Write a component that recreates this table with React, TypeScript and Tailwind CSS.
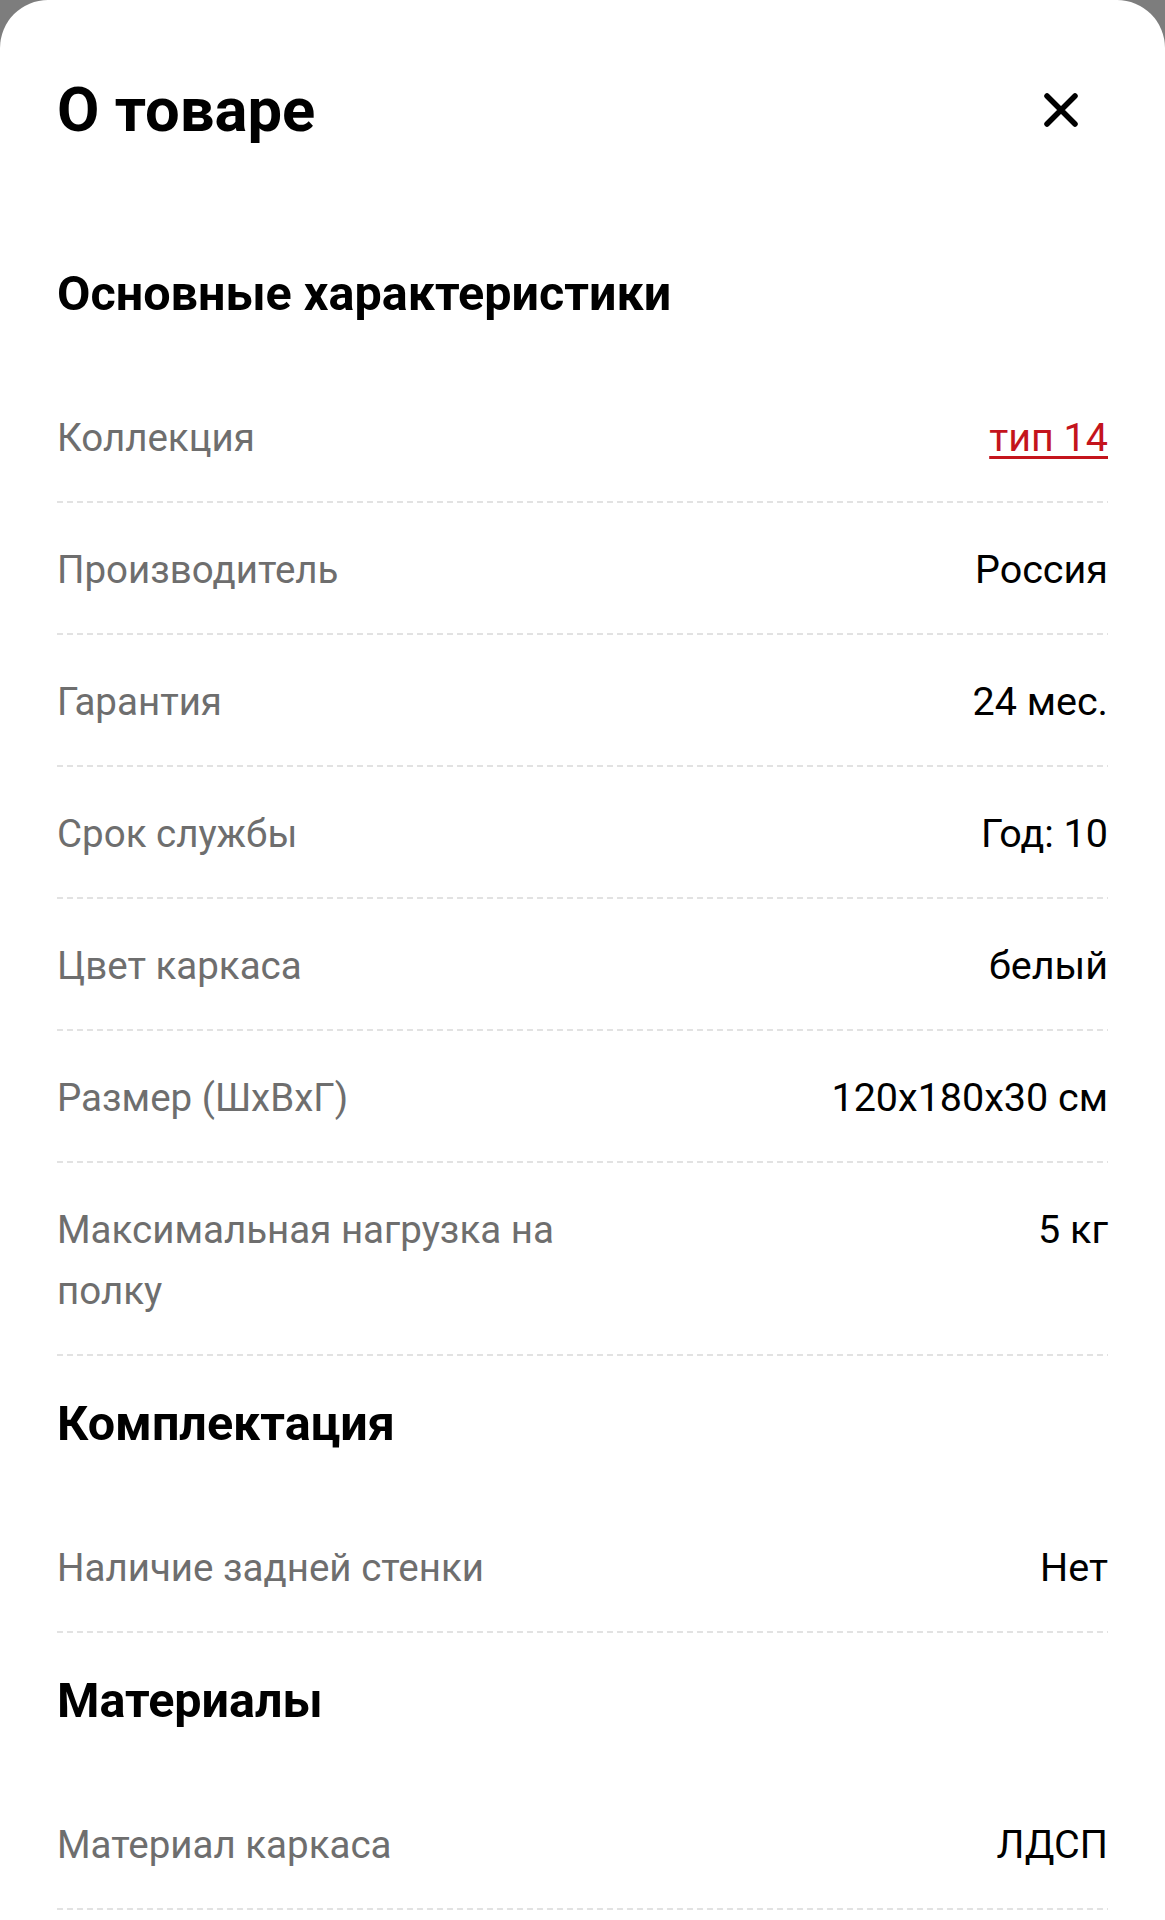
import React from "react";

type Row = { label: string; value: string; link?: boolean };

const sections: { title: string; rows: Row[] }[] = [
  {
    title: "Основные характеристики",
    rows: [
      { label: "Коллекция", value: "тип 14", link: true },
      { label: "Производитель", value: "Россия" },
      { label: "Гарантия", value: "24 мес." },
      { label: "Срок службы", value: "Год: 10" },
      { label: "Цвет каркаса", value: "белый" },
      { label: "Размер (ШхВхГ)", value: "120x180x30 см" },
      { label: "Максимальная нагрузка на полку", value: "5 кг" },
    ],
  },
  {
    title: "Комплектация",
    rows: [{ label: "Наличие задней стенки", value: "Нет" }],
  },
  {
    title: "Материалы",
    rows: [{ label: "Материал каркаса", value: "ЛДСП" }],
  },
];

function Divider() {
  return (
    <div className="h-[2px] w-full bg-[repeating-linear-gradient(to_right,#e2e2e2_0px,#e2e2e2_6px,transparent_6px,transparent_10px)]" />
  );
}

function SpecRow({ row }: { row: Row }) {
  return (
    <div>
      <div className="flex items-start justify-between gap-6 pt-[36px] pb-[33px] leading-[61px]">
        <div className="w-[540px] text-[38.5px] text-[#6e6e6e]">{row.label}</div>
        <div className="flex-1 text-right text-[39.5px] text-black">
          {row.link ? (
            <span className="text-[#c4141c] underline decoration-[3px] underline-offset-[5px]">
              {row.value}
            </span>
          ) : (
            row.value
          )}
        </div>
      </div>
      <Divider />
    </div>
  );
}

export default function App() {
  return (
    <div
      className="h-[1920px] w-full overflow-hidden bg-[#7d7d7d]"
      style={{ fontFamily: "Roboto, 'Noto Sans', Arial, sans-serif" }}
    >
      <div className="min-h-full rounded-t-[48px] bg-white px-[57px]">
        <div className="flex h-[146px] items-end justify-between">
          <h1 className="h-[72px] text-[61.5px] font-bold leading-[72px] text-black">
            О товаре
          </h1>
          <button className="mb-[16px] mr-[27px] flex h-[40px] w-[40px] items-center justify-center">
            <svg width="40" height="40" viewBox="0 0 40 40" fill="none">
              <path
                d="M6 6L34 34M34 6L6 34"
                stroke="#000"
                strokeWidth="5.5"
                strokeLinecap="round"
              />
            </svg>
          </button>
        </div>

        {sections.map((s, i) => (
          <section key={s.title}>
            <h2
              className={`${i === 0 ? "mt-[120px]" : "mt-[40px]"} mb-[49px] text-[48.5px] font-bold leading-[56px] text-black`}
            >
              {s.title}
            </h2>
            {s.rows.map((r) => (
              <SpecRow key={r.label} row={r} />
            ))}
          </section>
        ))}
      </div>
    </div>
  );
}
